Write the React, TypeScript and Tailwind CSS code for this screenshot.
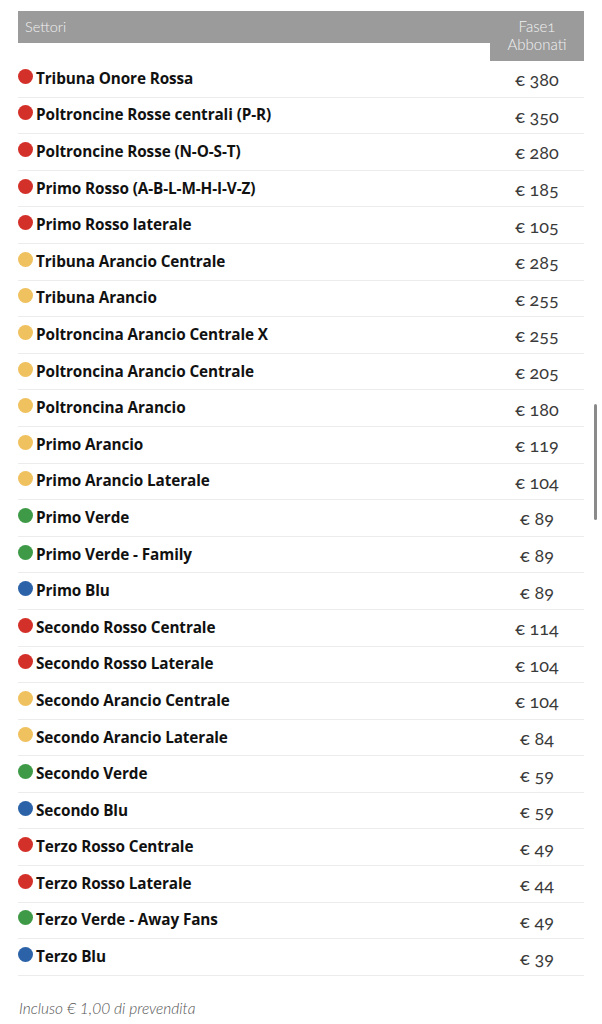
const RED = 'bg-[#d4302a]';
const YEL = 'bg-[#efc15f]';
const GRN = 'bg-[#3f9a48]';
const BLU = 'bg-[#2b62a8]';

const rows: { name: string; dot: string; price: string }[] = [
  { name: 'Tribuna Onore Rossa', dot: RED, price: '380' },
  { name: 'Poltroncine Rosse centrali (P-R)', dot: RED, price: '350' },
  { name: 'Poltroncine Rosse (N-O-S-T)', dot: RED, price: '280' },
  { name: 'Primo Rosso (A-B-L-M-H-I-V-Z)', dot: RED, price: '185' },
  { name: 'Primo Rosso laterale', dot: RED, price: '105' },
  { name: 'Tribuna Arancio Centrale', dot: YEL, price: '285' },
  { name: 'Tribuna Arancio', dot: YEL, price: '255' },
  { name: 'Poltroncina Arancio Centrale X', dot: YEL, price: '255' },
  { name: 'Poltroncina Arancio Centrale', dot: YEL, price: '205' },
  { name: 'Poltroncina Arancio', dot: YEL, price: '180' },
  { name: 'Primo Arancio', dot: YEL, price: '119' },
  { name: 'Primo Arancio Laterale', dot: YEL, price: '104' },
  { name: 'Primo Verde', dot: GRN, price: '89' },
  { name: 'Primo Verde - Family', dot: GRN, price: '89' },
  { name: 'Primo Blu', dot: BLU, price: '89' },
  { name: 'Secondo Rosso Centrale', dot: RED, price: '114' },
  { name: 'Secondo Rosso Laterale', dot: RED, price: '104' },
  { name: 'Secondo Arancio Centrale', dot: YEL, price: '104' },
  { name: 'Secondo Arancio Laterale', dot: YEL, price: '84' },
  { name: 'Secondo Verde', dot: GRN, price: '59' },
  { name: 'Secondo Blu', dot: BLU, price: '59' },
  { name: 'Terzo Rosso Centrale', dot: RED, price: '49' },
  { name: 'Terzo Rosso Laterale', dot: RED, price: '44' },
  { name: 'Terzo Verde - Away Fans', dot: GRN, price: '49' },
  { name: 'Terzo Blu', dot: BLU, price: '39' },
];

export default function App() {
  return (
    <div className="relative min-h-[1024px] bg-white font-['Lato','Noto_Sans',sans-serif] text-[#111]">
      <div className="pl-[18px] pr-[18px] pt-[11px]">
        {/* header */}
        <div className="flex h-[50px]">
          <div className="w-[472px] h-[32px] bg-[#9b9b9b] pl-[7px] text-[14.5px] leading-[32px] font-light text-[#f2f2f2]">
            Settori
          </div>
          <div className="w-[94px] bg-[#9b9b9b] pt-[6px] text-center text-[15px] leading-[18px] font-light text-[#f2f2f2] oldstyle-nums">
            Fase1
            <br />
            Abbonati
          </div>
        </div>

        {rows.map((r) => (
          <div key={r.name} className="flex h-[36.6px]">
            <div className="flex w-[472px] items-center border-b border-[#ececec] pb-[1px]">
              <span className={`mr-[3px] mb-[4px] h-[15px] w-[15px] shrink-0 rounded-full ${r.dot}`} />
              <span className="font-['Open_Sans',sans-serif] text-[15.3px] font-bold tracking-[-0.1px]">{r.name}</span>
            </div>
            <div className="flex w-[94px] items-center justify-center border-b border-[#ececec] pt-[2px] text-[18px] font-normal text-[#3a3a3a] oldstyle-nums">
              € {r.price}
            </div>
          </div>
        ))}

        <p className="mt-[21px] pl-[1px] text-[15.5px] font-light italic text-[#555]">
          Incluso € 1,00 di prevendita
        </p>
      </div>

      <div className="absolute left-[594px] top-[404px] h-[116px] w-[3px] rounded-full bg-[#8a8a8a]" />
    </div>
  );
}
